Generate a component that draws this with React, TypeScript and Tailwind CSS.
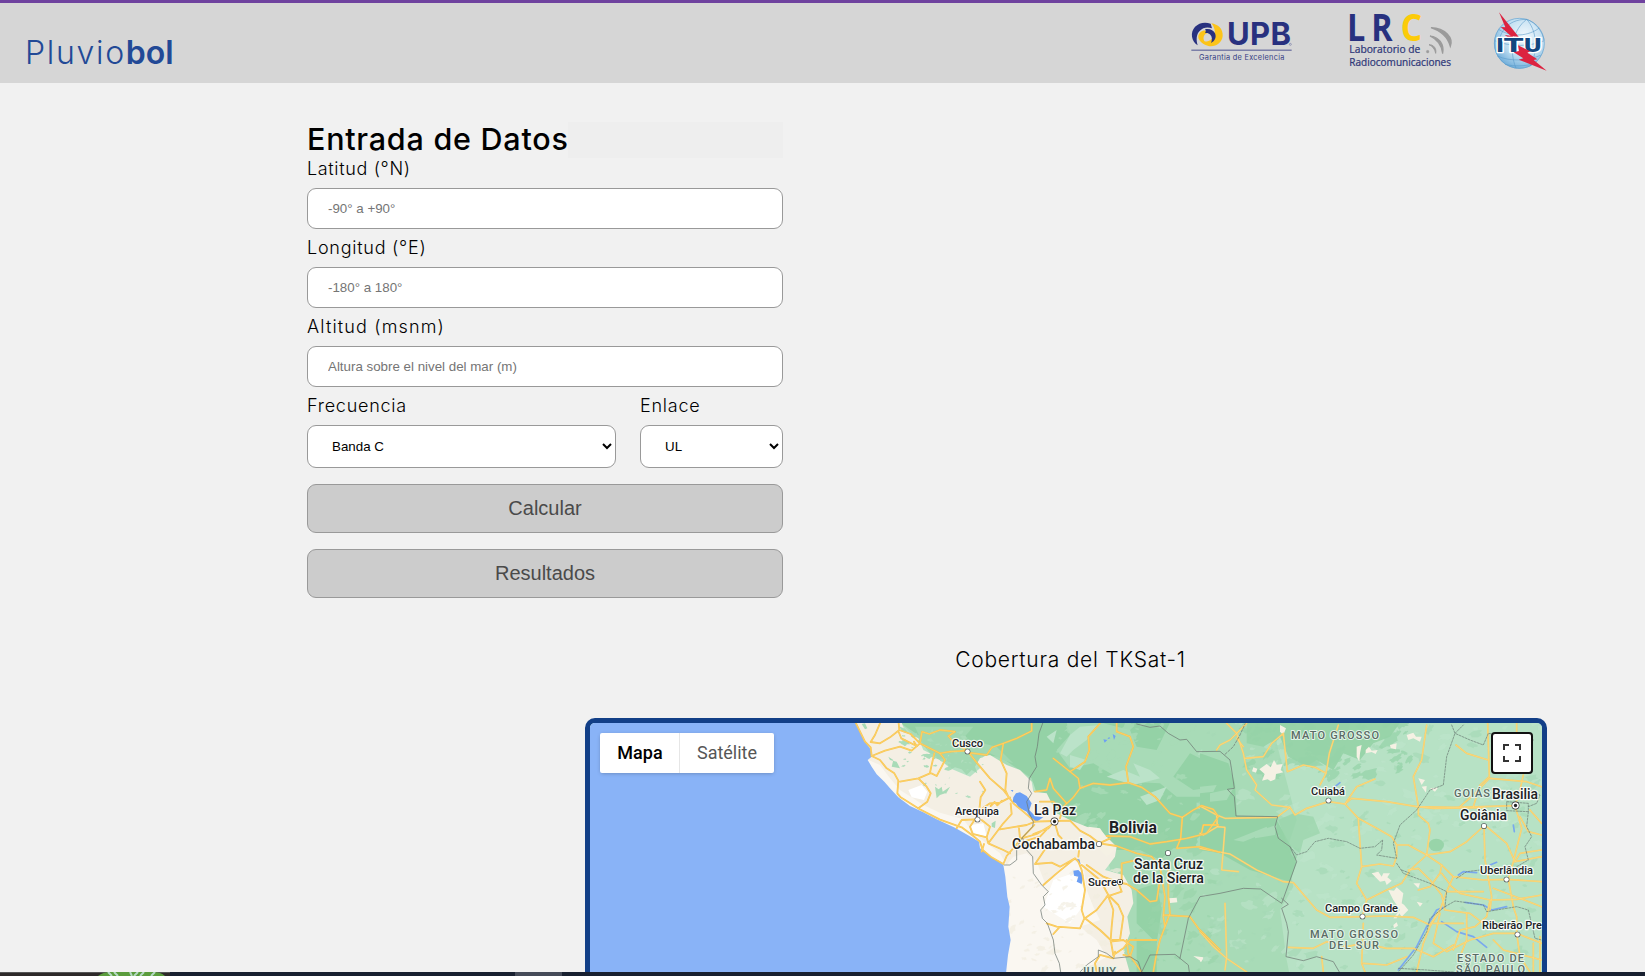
import React from "react";

const FIELDS = [
  { label: "Latitud (°N)", tracking: "tracking-[0.65px]", hint: "-90° a +90°" },
  { label: "Longitud (°E)", tracking: "tracking-[0.75px]", hint: "-180° a 180°" },
  { label: "Altitud (msnm)", tracking: "tracking-[1.15px]", hint: "Altura sobre el nivel del mar (m)" },
];

function UpbLogo() {
  return (
    <svg className="h-[44px] w-[102px] overflow-visible" viewBox="60 60 306 132">
      <path d="M122 71C90 60 62 82 66 110c2 12 8 20 17 26-5-17-4-33 6-43 10-11 24-13 37-8 -2-7-3-11-4-14Z" fill="#28317f" />
      <path d="M124 70c20 3 36 17 34 38-2 23-26 35-45 29-12-3-19-8-24-16 12 6 26 5 36-4 12-12 13-31-1-47Z" fill="#fcc419" />
      <path d="M97 93c-13 6-16 20-7 29 6 7 15 10 24 9-10-4-15-12-13-21 2-8 9-12 18-12-7-6-15-8-22-5Z" fill="#fcc419" />
      <path d="M105 88c14-3 25 2 30 12 5 12 0 23-12 29 4-9 4-18-2-25-4-5-10-6-16-5 3-4 3-7 0-11Z" fill="#28317f" />
      <text x="171" y="136" fontFamily="Inter, sans-serif" fontWeight="700" fontSize="93" textLength="192" fill="#28317f">UPB</text>
      <circle cx="361" cy="133" r="3" fill="none" stroke="#28317f" />
      <path d="M64 150.500H365" stroke="#4c5390" strokeWidth="3" />
      <text x="87" y="181" fontFamily="Inter, sans-serif" fontSize="22" textLength="256" fill="#343b82">Garantia de Excelencia</text>
    </svg>
  );
}

function LrcLogo() {
  return (
    <svg className="h-[58px] w-[105px] overflow-visible" viewBox="534 36 315 174" fontFamily="'Open Sans', sans-serif">
      <g fontWeight="700" fontSize="110">
        <text x="531" y="122" textLength="55" lengthAdjust="spacingAndGlyphs" fill="#28317f">L</text>
        <text x="604" y="122" textLength="64" lengthAdjust="spacingAndGlyphs" fill="#28317f">R</text>
        <text x="692" y="122" textLength="64" lengthAdjust="spacingAndGlyphs" fill="#fccb08">C</text>
      </g>
      <g fontSize="31" fill="#2e3778" stroke="#2e3778" strokeWidth=".7">
        <text x="538" y="158" textLength="213" lengthAdjust="spacingAndGlyphs">Laboratorio de</text>
        <text x="538" y="198" textLength="305" lengthAdjust="spacingAndGlyphs">Radiocomunicaciones</text>
      </g>
      <g fill="#9b9b9b" stroke="#9b9b9b">
        <circle cx="773" cy="155" r="4" />
        <path d="M777 134c14 0 23 11 20 26 -2-13-9-21-20-26Z" strokeWidth="3" />
        <path d="M780 108c26 2 44 24 38 53 -3-26-16-43-38-53Z" strokeWidth="3.500" />
        <path d="M783 83c43 1 68 31 58 56 -8-30-28-46-58-56Z" strokeWidth="4" />
      </g>
    </svg>
  );
}

function ItuLogo() {
  return (
    <svg className="h-[61px] w-[56px] overflow-visible" viewBox="966 33 168 183">
      <defs>
        <radialGradient id="globe" cx=".6" cy=".35" r=".7">
          <stop offset="0" stopColor="#f1f8fc" />
          <stop offset=".6" stopColor="#bcdcf0" />
          <stop offset="1" stopColor="#6aaad8" />
        </radialGradient>
      </defs>
      <circle cx="1048" cy="130" r="76" fill="url(#globe)" />
      <g fill="none" stroke="#5b9bc9" strokeWidth="1.800">
        <circle cx="1048" cy="130" r="75" />
        <path d="M1070 58c-40 30-55 90-32 147M1070 58c28 30 38 90 10 141M1070 58c-60 0-85 40-90 100M1070 58c30 10 48 40 52 62M986 88c40 26 90 20 122-4M974 122c50 20 105 18 149 0M982 168c40 18 90 14 130-2M1005 193c28 8 60 4 84 0" />
      </g>
      <path d="M987 37l60 75-19-3 18 26-42-30 18 2-30-26 14 1Z" fill="#dc2340" />
      <g stroke="#fff" strokeWidth="8" strokeLinejoin="round" paintOrder="stroke" fill="#13477f" fontFamily="'DejaVu Sans', sans-serif" fontWeight="700" fontSize="59">
        <text x="977" y="157" textLength="26" lengthAdjust="spacingAndGlyphs">I</text>
        <text x="1002" y="157" textLength="58" lengthAdjust="spacingAndGlyphs">T</text>
        <text x="1060" y="157" textLength="57" lengthAdjust="spacingAndGlyphs">U</text>
      </g>
      <path d="M1044 136l36 18-8 4 30 20-11 2 39 32-84-33 14-4-29-18 16-4Z" fill="#dc2340" />
    </svg>
  );
}

function makePatches(seed: number, count: number, x0: number, y0: number, w: number, h: number, size: number) {
  let s = seed;
  const rnd = () => {
    s = (s * 16807) % 2147483647;
    return s / 2147483647;
  };
  let d = "";
  for (let i = 0; i < count; i++) {
    const cx = x0 + rnd() * w;
    const cy = y0 + rnd() * h;
    const r = size * (0.25 + rnd() * rnd() * 1.3);
    const tilt = 2.2 + rnd() * 1.4;
    const n = 14;
    for (let k = 0; k < n; k++) {
      const a = (k / n) * 6.283;
      const q = r * (0.5 + rnd() * 0.65);
      const px = Math.cos(a) * q * 1.5;
      const py = Math.sin(a) * q * 0.75;
      const x = cx + px * Math.cos(tilt) - py * Math.sin(tilt);
      const y = cy + px * Math.sin(tilt) + py * Math.cos(tilt);
      d += (k ? "L" : "M") + x.toFixed(1) + " " + y.toFixed(1);
    }
    d += "Z";
  }
  return d;
}

const LIGHT_EAST = makePatches(77, 170, 0, 30, 1040, 760, 20);
const DARK_EAST = makePatches(911, 170, 0, 30, 1040, 760, 14);
const DARK_NE = makePatches(313, 90, 130, 30, 500, 170, 19);
const LIGHT_WEST = makePatches(4242, 80, 650, 30, 480, 340, 15);
const MID_SOUTH = makePatches(555, 60, 880, 380, 240, 400, 15);
const SAND = makePatches(1234, 70, 500, 480, 360, 300, 11);
const ANDES = makePatches(808, 55, 190, 60, 240, 120, 9);
const ALTIPLANO = makePatches(2718, 14, 250, 130, 200, 180, 6);

const WEST_ROADS = [
  "M48 40L75 95 92 112 95 138 120 150 140 175 163 190 175 212 172 250 182 262 238 297 300 329 365 352 400 378 420 395 428 420 452 440 490 462 500 438 545 385 583 345",
  "M120 40L105 75 92 96 120 100 150 82 178 60 176 40M95 138L135 122 180 110 215 122 240 100 300 130 330 125M178 60L212 72 240 100 246 65 268 72 300 60 345 65 325 78 340 96 382 122",
  "M176 66L184 85 230 108 222 95M330 125L382 122 412 160 450 205 490 240 520 280 550 305 585 335 643 333M385 128L440 135 456 112 490 100 530 85 575 63 575 40M490 100L482 150 500 190 496 240 506 262",
  "M283 130L275 165 270 188 290 198 305 170 315 150 300 130M270 190L235 205 180 215M235 205L260 230 272 250 262 275 235 295M420 215L436 240 422 262 418 300",
  "M350 355L365 330 405 328 390 350 398 372 440 382 450 350 425 330M440 382L445 400 490 420 510 430M432 402L425 425M445 400L490 340 515 312 512 280M420 300L450 280 480 278 510 262M452 288l12-12 8 10 14-14M480 358L560 345 585 335M540 385L537 355M545 385L590 372 630 348 600 380 560 392M643 333L625 355 580 372",
  "M643 333L655 375 665 385M643 333L690 332 720 362 750 378 778 400 830 408 890 430 935 440M660 325L670 290 700 262 720 235 715 205 690 185 640 145M720 235L760 220 810 225 865 218 858 170 880 110 870 80 830 65 830 40M690 185L735 155 748 120 745 80 780 40M865 218L905 232 945 260 990 310 1027 322",
  "M1027 322L1022 385 1010 415 1080 410 1140 427M1027 322L1060 300 1085 287 1120 298 1135 320 1100 370 1040 385 980 395 930 402 870 380 800 378M778 400L810 385M1085 368L1090 345 1135 345M585 245L620 240 630 205 640 235 680 280M600 275L640 275 660 295",
  "M620 410L600 440 585 462 635 458 660 470 705 445 715 455M705 445L650 490 610 525M715 455L725 480 735 540 725 600 733 625 720 655 650 650 620 640M735 625L770 600 805 555 780 510 725 465M735 625L780 660 812 690 820 735M805 555L835 585 850 620 840 690 818 690M805 560L820 600 815 650 812 690M640 672L658 652M740 465L790 500 835 517 860 522 890 540 930 575 950 572 958 520",
  "M935 440L960 470 975 560 970 620 975 650 960 690 948 740 940 786M985 480L985 560 990 610 975 650M835 517L845 545 800 560M845 515L845 460 890 450M970 615L1050 620 1075 655 1140 720M820 735L850 715 870 690 950 690M860 690L865 730 905 786M812 695L850 690 880 710 870 740 850 735M720 395L715 440M780 735L765 760 770 786M780 735L820 745 825 725",
];

const EAST_ROADS = [
  "M80 40L110 70 140 40M50 120L60 105 90 90 110 70 130 130 140 180 170 225 165 240 215 285 270 292 285 315 320 295 385 275 435 282 455 265 560 275 650 290 760 292 850 290 945 287",
  "M135 145L190 140 215 100 250 70 262 185 310 165 345 172 378 190 360 225M378 190L388 130 415 45M110 85L130 110M435 282L470 230 525 207M435 282L475 325 530 355 575 380 590 405 625 405 680 435 725 465 760 500 850 510 920 508 1025 515",
  "M0 288L50 315 75 325 230 322 270 292M50 315L52 350 75 352 65 480 115 485M52 350L10 375 0 370M0 415L90 432 170 480 250 515 280 518 320 565 350 600 390 622 487 620 560 618 640 622 690 645 720 600",
  "M475 325L480 400 485 470 470 520 500 570 487 620M485 470L540 462 580 468 590 440 590 405M500 570L560 540 605 520 630 480 680 435M680 45L665 150 640 200 655 290 655 315 685 340 690 360 680 435 750 425 800 395 852 348",
  "M863 40L868 200 840 225 820 290M950 40L950 70M768 105L800 130 865 150M970 195L960 240 945 287 965 355 940 455 925 508M852 348L855 450 875 560 870 600M860 350L920 400 945 455 1025 440M990 300L1025 340M960 320L985 365 1025 375M1025 230L980 215 870 205",
  "M625 480L655 475 690 510 725 555 735 600 810 610 850 640M725 465L720 490 690 530 655 540M725 490L755 530 780 550 870 570 950 568 1025 555M925 508L940 590 950 620 950 670M760 500L740 545 720 600 690 650 670 700 650 786M720 610L700 700 740 725 810 690 880 670 950 670",
  "M800 610L800 690 780 740M870 570L860 620 825 650 780 660 760 720M265 712L340 715 380 695 440 710 490 700 560 715 640 715 700 740 760 705M490 640L485 760 495 786M490 760L560 765 620 740M365 740L370 786M0 665L40 710 80 745 140 786M75 580L80 740 75 780M950 670L960 740 990 786M950 670L1025 700M880 690L910 720 1025 750",
  "M650 290L700 295 850 293M780 290L820 255 868 205M700 640L790 640M740 545L850 545M880 535L1025 590M945 455L960 430 1025 420M1000 700L1000 786M1020 680L1020 786",
];

const CITIES: [string, number, number, number, number, number, number, number][] = [
  // name, text x, baseline, width, size, weight, dot x, dot y
  ["Cusco", 952, 746.500, 31, 11.5, 500, 967.5, 751.500],
  ["Arequipa", 955, 814.500, 44, 11.5, 500, 977.5, 819.500],
  ["Cochabamba", 1012, 849, 83, 14, 500, 1099, 844],
  ["Santa Cruz", 1134, 869, 69, 14, 500, 1168, 853],
  ["de la Sierra", 1133, 883, 71, 14, 500, 0, 0],
  ["Cuiabá", 1311, 795, 34, 11.5, 500, 1328.5, 800.500],
  ["Goiânia", 1460, 820, 47, 14, 500, 1484, 826],
  ["Uberlândia", 1480, 874, 53, 11.5, 500, 1506.5, 879.500],
  ["Campo Grande", 1325, 912, 73, 11.5, 500, 1362.5, 916.500],
  ["Ribeirão Pre", 1482, 929, 60, 11.5, 500, 1517.5, 934.500],
  ["Sucre", 1088, 886, 29, 11.5, 500, 0, 0],
  ["La Paz", 1034, 815, 42, 14, 500, 0, 0],
  ["Brasilia", 1492, 799, 46, 14, 500, 0, 0],
  ["Bolivia", 1109, 832.500, 48, 16, 700, 0, 0],
];

const STATES: [string, number, number, number][] = [
  ["MATO GROSSO", 1291, 739, 88],
  ["GOIÁS", 1454, 797, 36],
  ["MATO GROSSO", 1310, 937.500, 88],
  ["DEL SUR", 1329, 949, 50],
  ["ESTADO DE", 1457, 961.500, 67],
  ["SÃO PAULO", 1456, 973, 69],
  ["JUJUY", 1080, 975, 36],
];

function BoliviaMap() {
  return (
    <svg className="block h-full w-full" viewBox="590 723 952 249" preserveAspectRatio="xMinYMin slice">
      <rect x="590" y="723" width="960" height="260" fill="#b7e2c5" />
      <g transform="translate(840 710) scale(.33333)">
        <path d="M180 38L1300 38 1310 100 1370 330 1340 420 1360 530 1320 600 1340 750 1350 800 850 800 860 600 780 400 560 200 430 160 300 150Z" fill="#a8dbb7" />
        <path d="M180 38L680 38 690 75 650 120 690 175 760 160 810 190 860 215 960 220 1010 260 1100 260 1140 240 1180 320 1310 330 1370 440 1350 510 1250 480 1180 440 1090 410 1000 415 960 450 900 420 830 420 740 350 660 320 590 250 575 205 480 140 300 120Z" fill="#94d2a6" />
        <path d="M790 40L870 60 890 110 950 120 990 38ZM890 540L950 520 965 600 950 700 890 640Z" fill="#94d2a6" />
        <path d="M890 690L950 690 950 786 890 786ZM1050 130L1130 170 1170 250 1130 230 1060 240 1000 200Z" fill="#94d2a6" />
        <path d={LIGHT_WEST} fill="#a8dbb7" opacity=".8" />
        <path d={MID_SOUTH} fill="#98d4a9" opacity=".65" />
        <path d="M690 75L720 50 780 45 740 90 700 120 680 140 660 130ZM690 135L740 150 720 180 690 170ZM800 200L850 180 900 200 880 160 930 180 960 205 880 225ZM900 260L980 230 960 270 920 285ZM620 80L650 60 640 100Z" fill="#bbe3c9" />
      </g>
      <g transform="translate(1200 710) scale(.33333)">
        <path d={LIGHT_EAST} fill="#bfe6cd" opacity=".5" />
        <path d={DARK_EAST} fill="#a5d9b5" opacity=".65" />
        <path d="M140 38L600 38 570 80 520 100 480 150 430 130 400 180 350 150 320 170 265 140 240 80 190 110 140 100Z" fill="#98d4a9" />
        <path d={DARK_NE} fill="#96d3a8" opacity=".75" />
        <path d="M235 330L280 310 340 320 360 370 310 390 300 430 260 400Z" fill="#98d4a9" opacity=".7" />
        <ellipse cx="709" cy="405" rx="23" ry="19" fill="#98d4a9" />
        <path d="M0 130L85 160 105 220 110 318 230 320 225 370 290 455 270 515 150 480 60 430 0 420Z" fill="#94d2a6" />
        <path d="M30 250L100 235 80 270 30 275ZM165 365L230 345 225 375 165 385Z" fill="#a8dbb7" />
        <path d="M0 230L50 225 40 245 0 250ZM100 390L200 350 205 365 130 395Z" fill="#a8dbb7" />
        <path d="M160 172l12 4-4 12-12-4ZM178 178L200 162 212 172 222 150 230 164 248 162 242 180 250 187 228 192 226 208 212 214 203 208 186 212 194 192ZM240 45L258 55 250 75 240 65ZM470 110L485 105 480 130 478 155 470 140ZM497 120l10-10 8 12 18-2-6 12-12-6-18 4ZM570 105L590 100 588 118 572 115ZM620 75L640 68 648 80 665 80 660 95 640 85 625 90ZM655 205L675 210 665 225ZM665 230L680 228 678 248ZM690 235L715 232 705 245ZM515 490L535 485 545 500 550 490 570 490 562 502 575 512 560 525 555 512 540 515ZM565 540L582 542 590 532 610 550 605 580 612 584 625 600 605 620 598 610 590 625 580 625 600 600 580 570ZM580 645l10-8 4 10-12 8ZM640 520L660 520 655 535ZM650 575L668 580 660 590ZM0 745L10 745 0 757Z" fill="#f5f1e4" />
      </g>
      <g transform="translate(840 710) scale(.33333)">
        <path d="M0 38L185 38 195 65 235 85 250 120 290 140 330 175 390 200 420 175 405 145 450 135 500 165 540 180 575 215 580 245 620 250 650 310 690 330 740 350 780 360 830 410 825 440 795 480 850 495 875 540 880 580 862 620 870 670 850 720 870 790 490 790 0 790Z" fill="#f4efe4" />
        <path d="M80 148L120 165 150 205 180 240 215 262 250 285 300 308 370 328 400 370 440 400 480 430 500 465 520 440 560 430 590 455 615 520 690 450 730 460 740 540 760 590 780 630 720 650 770 690 800 740 720 786 490 786 300 500 80 300Z" fill="#faf7f1" />
        <path d="M245 225L262 245 252 270 215 262 205 240ZM390 345L430 340 440 378 405 375ZM640 510L700 490 735 540 720 600 690 640 640 610 610 590Z" fill="#fff" />
        <path d={SAND} fill="#f1ecde" opacity=".65" />
        <path d="M225 50L400 50 370 85 470 110 520 160 490 150 450 130 420 145 405 170 412 190 395 180 380 195 365 178 345 172 330 180 322 160 300 150 280 142 262 120 250 105Z" fill="#a2d8b2" />
        <path d={ANDES} fill="#aadcb9" />
        <path d={ALTIPLANO} fill="#b5dfc1" />
        <path d="M65 42L75 40 82 55 75 58ZM145 140L160 150 155 170 180 175 170 155 150 150ZM285 230L296 238 305 230 308 245 330 230 320 248 300 255 290 265ZM175 48l20 8 10 14-16-4ZM455 340l12-8-2 22-10-4Z" fill="#a8dbb7" />
        <path d="M745 350L780 355 825 420 800 440 760 400ZM985 565L1010 563 1012 577 990 579ZM1060 738L1090 742 1085 755Z" fill="#f5f1e4" />
        <path d="M0 38H47L60 65 75 95 92 118 95 140 83 150 95 170 110 193 133 215 150 235 175 262 210 288 250 307 290 328 345 353 400 385 417 395 420 415 450 438 490 464 496 500 502 560 509 590 505 650 512 690 504 735 498 790H0Z" fill="#89b3f7" />
        <path d="M520 262L528 250 540 247 560 258 575 280 568 300 585 318 610 322 590 335 575 330 560 305 535 292 528 280 518 275ZM512 240l8 0-2 6ZM700 482L715 480 730 495 725 522 710 515 715 500 702 497ZM710 448l8 0 4 15-8-5ZM790 88l12 2-8 8ZM818 72l9 6-5 12ZM802 88l5-7 4 4Z" fill="#6c9ff4" />
      </g>
      <rect x="589" y="722" width="252" height="252" fill="#89b3f7" />
      <g fill="none" strokeLinejoin="round" strokeLinecap="round">
        <g transform="translate(1200 710) scale(.33333)">
          <path d="M775 495L790 485 830 488M870 465l20-8M735 590L710 600 680 650 650 710 595 780M725 635L770 665 820 680 860 712M795 577L850 585 875 600 920 590M405 230l15-12M940 345l3 20" stroke="#79a8ee" strokeWidth="5" />
          {EAST_ROADS.map((d) => (
            <path key={d} d={d} stroke="#f6cd68" strokeWidth="5" />
          ))}
          {EAST_ROADS.map((d) => (
            <path key={d} d={d} stroke="#ffe18c" strokeWidth="1.500" />
          ))}
        </g>
        <g transform="translate(840 710) scale(.33333)">
          {WEST_ROADS.map((d) => (
            <path key={d} d={d} stroke="#f8c450" strokeWidth="5.400" />
          ))}
          {WEST_ROADS.map((d) => (
            <path key={d} d={d} stroke="#ffdc7c" strokeWidth="1.500" />
          ))}
          <g stroke="#6f7a74" strokeWidth="2.200">
            <path d="M608 40L597 70 592 110 585 140 590 170 568 205 565 235 575 250 560 275 568 310 580 335 578 350 545 385 530 415 530 450 510 465 493 465" />
            <path d="M548 385L560 420 578 440 580 490 605 525 625 545 610 560 615 585 602 600 607 625 622 640 640 690 645 730 658 760 662 786" />
            <path d="M890 42L930 52 960 48 985 70 1020 90 1040 88 1070 125 1140 124 1170 150 1175 180 1183 235 1162 238 1183 260 1188 318 1313 320 1305 350 1315 385 1350 410 1370 455 1325 580 1262 537 1210 535 1140 550 1080 560 1045 625 1020 745 1005 733 930 735 905 786" />
            <path d="M1325 565L1345 583 1325 595 1340 640 1345 665 1338 740 1390 752 1430 740 1480 755 1498 786M720 786L740 765 775 740 775 720 800 730 820 745 870 740 895 755 905 786M1020 745L1045 765 1048 786" />
            <path d="M1155 133L1180 110 1200 75 1215 42" strokeDasharray="7 5" />
          </g>
        </g>
        <g transform="translate(1200 710) scale(.33333)" stroke="#6f8178" strokeWidth="2.200" strokeDasharray="6 4">
          <path d="M270 410L290 435 320 425 345 395 385 385 440 395 480 415 525 410 548 390 545 420 530 435 560 440 590 445 580 400 600 345 650 300 690 240 730 225 740 140 765 70 790 45M755 45L765 70 810 90 850 105 865 70 1000 90" />
          <path d="M590 460L610 490 690 520 740 545 735 590 690 625 680 665 640 735 595 786M735 590L765 573 850 585 860 605 950 590 985 600 1005 685 1025 690M595 775L680 780 760 786M770 505L800 485 840 480M985 290L1010 280 1020 255 990 240M920 275L985 280 985 305 920 302ZM985 305L980 350 995 380 975 410 985 450 950 470M605 480L630 490" />
        </g>
      </g>
      <g fontFamily="Roboto, sans-serif" paintOrder="stroke" strokeLinejoin="round">
        {STATES.map(([name, x, y, w]) => (
          <text key={name + y} x={x} y={y} textLength={w} fontSize="11" fontWeight="500" fill="#5a6b64" stroke="#e3f4e9" strokeWidth="2">
            {name}
          </text>
        ))}
        {CITIES.map(([name, x, y, w, size, weight, dx, dy]) => (
          <g key={name}>
            <text x={x} y={y} textLength={w} lengthAdjust="spacingAndGlyphs" fontSize={size} fontWeight={weight} fill="#202124" stroke="#fff" strokeWidth="2.500" strokeOpacity=".85">
              {name}
            </text>
            {dx > 0 && <circle cx={dx} cy={dy} r="2.300" fill="#fff" stroke="#3c4043" strokeWidth="1.100" />}
          </g>
        ))}
        {[[1054.5, 821.5, 3.3], [1515.5, 805.5, 3.3], [1120, 882, 2.4]].map(([x, y, r]) => (
          <g key={x}>
            <circle cx={x} cy={y} r={r} fill="#fff" stroke="#202124" strokeWidth="1.200" />
            <circle cx={x} cy={y} r={r / 2} fill="#202124" />
          </g>
        ))}
      </g>
    </svg>
  );
}

function Label({ tracking, children }: { tracking: string; children: React.ReactNode }) {
  return <label className={"block h-[38px] text-[18px] leading-[38px] font-light text-black " + tracking}>{children}</label>;
}

export default function App() {
  return (
    <div className="flex h-screen flex-col overflow-hidden bg-[#f1f1f1] font-['Inter',sans-serif]">
      <header className="flex h-[83px] shrink-0 justify-between border-t-[3px] border-[#6f429f] bg-[#d6d6d6] pr-[97px] pl-[25px]">
        <div className="pt-[30px] text-[32px] leading-[40px] font-light tracking-[1.7px] text-[#224996]">
          Pluvio<span className="font-semibold tracking-[0px]">bol</span>
        </div>
        <div className="flex items-start">
          <div className="mt-[17px] mr-[56px]"><UpbLogo /></div>
          <div className="mt-[9px] mr-[39px]"><LrcLogo /></div>
          <div className="mt-[8px]"><ItuLogo /></div>
        </div>
      </header>

      <main className="min-h-0 flex-1 overflow-hidden">
        <form className="ml-[307px] w-[476px] pt-[39px]">
          <div className="flex h-[36px]">
            <h1 className="w-[261px] text-[30.500px] leading-[34px] font-medium tracking-[0.75px] whitespace-nowrap text-black">Entrada de Datos</h1>
            <div className="flex-1 bg-[#eeeeee]" />
          </div>
          {FIELDS.map((f, i) => (
            <div key={f.label} className={i === 0 ? "-mt-2" : ""}>
              <Label tracking={f.tracking}>{f.label}</Label>
              <input
                placeholder={f.hint}
                className="block h-[41px] w-full rounded-[9px] border border-[#999] bg-white px-5 font-['Liberation_Sans',Arial,sans-serif] text-[13.333px] placeholder:text-[#757575]"
              />
            </div>
          ))}
          <div className="flex justify-between">
            <div className="w-[309px]">
              <Label tracking="tracking-[0.75px]">Frecuencia</Label>
              <select className="block h-[43px] w-full rounded-[9px] border border-[#999] bg-white pr-px pl-5 font-['Liberation_Sans',Arial,sans-serif] text-[13.333px] text-black">
                <option>Banda C</option>
              </select>
            </div>
            <div className="w-[143px]">
              <Label tracking="tracking-[0.75px]">Enlace</Label>
              <select className="block h-[43px] w-full rounded-[9px] border border-[#999] bg-white pr-px pl-5 font-['Liberation_Sans',Arial,sans-serif] text-[13.333px] text-black">
                <option>UL</option>
              </select>
            </div>
          </div>
          <div className="mt-4 flex flex-col gap-4">
            {["Calcular", "Resultados"].map((t) => (
              <button key={t} type="button" className="h-[49px] rounded-[9px] border border-[#999] bg-[#ccc] pb-[2px] font-['Liberation_Sans',Arial,sans-serif] text-[20px] text-[#4a4a4a]">
                {t}
              </button>
            ))}
          </div>
        </form>

        <section className="ml-[585px] w-[962px]">
          <h2 className="h-[120px] pt-[47px] pl-[9px] text-center text-[21px] leading-[30px] font-light tracking-[0.75px] text-black">Cobertura del TKSat-1</h2>
          <div className="relative h-[400px] overflow-hidden rounded-[10px] border-[5px] border-[#123f87] bg-[#89b3f7]">
            <div className="h-[249px]"><BoliviaMap /></div>
            <div className="absolute top-[10px] left-[10px] flex h-[40px] rounded-[2px] bg-white font-['Roboto',sans-serif] text-[18px] leading-[40px] shadow-[0_1px_4px_-1px_rgba(0,0,0,0.3)]">
              <span className="w-[80px] border-r border-[#e6e6e6] pl-px text-center font-medium text-black">Mapa</span>
              <span className="w-[94px] text-center text-[#565656]">Satélite</span>
            </div>
            <div className="absolute top-[9px] right-[9px] flex size-[42px] items-center justify-center rounded-[4px] border-2 border-[#111] bg-white">
              <svg className="size-[18px]" viewBox="0 0 18 18" fill="#333">
                <path d="M0 0v6h2V2h4V0H0Zm16 0h-4v2h4v4h2V0h-2Zm0 16h-4v2h6v-6h-2v4ZM2 12H0v6h6v-2H2v-4Z" />
              </svg>
            </div>
          </div>
        </section>
      </main>

      <footer className="flex h-1 shrink-0 bg-[#182030]">
        <div className="h-full w-[170px] border-t border-[#555] bg-[#2d2929] pl-[98px]">
          <svg className="-mt-px block h-1 w-[67px]" viewBox="0 0 67 4">
            <path d="M0 4Q5 0 12 0H55Q63 0 67 4Z" fill="#5a9c3c" />
            <path d="M10 0l4 4M16 0l4 4M40 0l-4 4M46 0l-4 4M57 0l-4 4M32 0l2 4" stroke="#b4d9c4" strokeWidth="2" />
          </svg>
        </div>
        <div className="ml-[345px] h-full w-[47px] bg-[#454b58]" />
      </footer>
    </div>
  );
}
